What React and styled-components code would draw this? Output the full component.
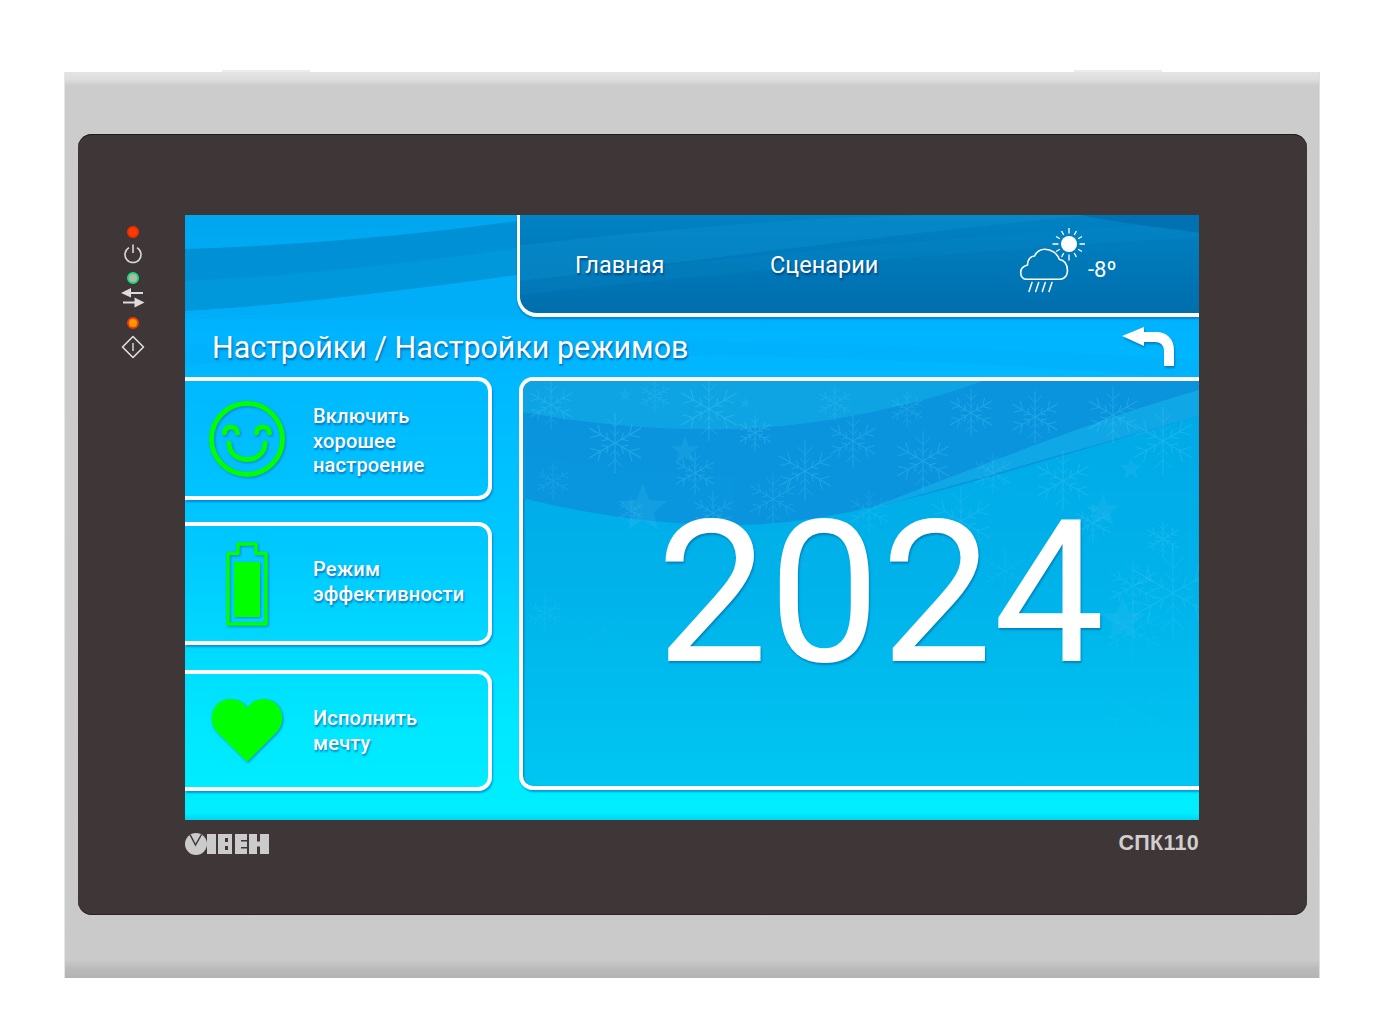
import styled, { createGlobalStyle } from "styled-components";

const GlobalStyle = createGlobalStyle`
  html, body {
    margin: 0;
    padding: 0;
    background: #fff;
  }
  body {
    font-family: Roboto, "Liberation Sans", sans-serif;
  }
`;

const Page = styled.div`
  width: 1400px;
  height: 1022px;
  padding: 72px 0 0 64px;
  box-sizing: border-box;
  overflow: hidden;
`;

const Bezel = styled.div`
  position: relative;
  width: 1256px;
  height: 906px;
  box-sizing: border-box;
  padding: 62px 13px 63px 14px;
  background: linear-gradient(
    180deg,
    #e4e4e4 0,
    #dedede 7px,
    #cccccc 14px,
    #cacaca 888px,
    #b9b9b9 898px,
    #b4b4b4 100%
  );
  box-shadow: inset 1px 0 0 #e6e6e6, inset -1px 0 0 #dedede;
`;

const Tab = styled.div`
  position: absolute;
  top: -2px;
  left: ${(p) => p.$left}px;
  width: 88px;
  height: 2px;
  background: #ececec;
`;

const Face = styled.div`
  height: 100%;
  box-sizing: border-box;
  display: flex;
  padding-top: 81px;
  background: #3f3638;
  border-radius: 14px;
  box-shadow: inset 0 1px 0 #1f1b1c, inset 0 -1px 0 #2a2526;
`;

const LedRail = styled.div`
  width: 107px;
  flex: none;
  box-sizing: border-box;
  padding: 11px 0 0 3px;
  display: flex;
  flex-direction: column;
  align-items: center;
`;

const Led = styled.span`
  width: ${(p) => p.$size}px;
  height: ${(p) => p.$size}px;
  border-radius: 50%;
  background: ${(p) => p.$core};
  border: 2px solid ${(p) => p.$ring};
  box-sizing: border-box;
  flex: none;
  margin-bottom: ${(p) => p.$after}px;
`;

const RailIcon = styled.svg`
  display: block;
  flex: none;
  margin-bottom: ${(p) => p.$after}px;
`;

const Column = styled.div`
  width: 1014px;
  flex: none;
`;

const Screen = styled.div`
  position: relative;
  width: 1014px;
  height: 605px;
  overflow: hidden;
  background: linear-gradient(180deg, #00a6ee 0, #00b4ff 20%, #00c8ff 55%, #00e8ff 85%, #00eeff 98.8%, #00d4f0 100%);
`;

const ScreenWaves = styled.svg`
  position: absolute;
  top: 0;
  left: 0;
`;

const TopRow = styled.div`
  position: relative;
  display: flex;
  justify-content: flex-end;
  height: 102px;
`;

const Nav = styled.nav`
  position: relative;
  width: 682px;
  height: 102px;
  box-sizing: border-box;
  overflow: hidden;
  border-left: 3px solid #fff;
  border-bottom: 4px solid #fff;
  border-bottom-left-radius: 20px;
  background: linear-gradient(180deg, #0082c4 0, #0078b8 50%, #006ead 100%);
  box-shadow: 0 2px 2px rgba(0, 80, 160, 0.45);
  display: flex;
  align-items: center;
  color: #fff;
`;

const NavWaves = styled.svg`
  position: absolute;
  top: 0;
  left: 0;
`;

const NavLink = styled.span`
  position: relative;
  width: ${(p) => p.$width}px;
  margin-left: ${(p) => p.$left}px;
  flex: none;
  font-size: 23.5px;
  line-height: 28px;
  padding-top: 2px;
  text-shadow: 1px 2px 2px rgba(0, 50, 110, 0.7);
`;

const Weather = styled.div`
  position: relative;
  display: flex;
  align-items: flex-start;
  margin-left: 138px;
  margin-top: -6px;
`;

const Temp = styled.span`
  font-size: 22px;
  line-height: 26px;
  margin: 29px 0 0 3px;
`;

const TitleRow = styled.div`
  position: relative;
  height: 60px;
  box-sizing: border-box;
  padding: 13px 24px 0 27px;
  display: flex;
  justify-content: space-between;
  align-items: flex-start;
`;

const Title = styled.h1`
  margin: 0;
  font-weight: 400;
  font-size: 30.45px;
  line-height: 36px;
  color: #fff;
  text-shadow: 1px 2px 2px rgba(0, 70, 150, 0.65);
`;

const BackIcon = styled.svg`
  display: block;
  margin-top: -3px;
  filter: drop-shadow(1px 2px 1px rgba(0, 70, 150, 0.5));
`;

const Body = styled.div`
  position: relative;
  display: flex;
  justify-content: space-between;
  align-items: flex-start;
`;

const Cards = styled.div`
  width: 307px;
  flex: none;
`;

const Card = styled.div`
  width: 307px;
  height: ${(p) => p.$height}px;
  margin-bottom: ${(p) => p.$after}px;
  box-sizing: border-box;
  display: flex;
  align-items: center;
  border: 4px solid #fff;
  border-left: 0;
  border-radius: 0 14px 14px 0;
  box-shadow: 1px 2px 2px rgba(0, 90, 190, 0.55);
`;

const CardIcon = styled.div`
  width: 124px;
  margin-right: 4px;
  flex: none;
  display: flex;
  justify-content: center;
  svg {
    display: block;
    filter: drop-shadow(1px 1px 1px rgba(0, 80, 170, 0.6));
  }
`;

const CardLabel = styled.div`
  font-size: 20px;
  font-weight: 500;
  line-height: 24.5px;
  color: #fff;
  letter-spacing: 0.2px;
  padding-top: ${(p) => p.$nudge || 0}px;
  padding-bottom: ${(p) => p.$lift || 0}px;
  text-shadow: 1px 2px 2px rgba(0, 80, 170, 0.65);
`;

const Hero = styled.div`
  position: relative;
  width: 680px;
  height: 413px;
  box-sizing: border-box;
  overflow: hidden;
  border: 4px solid #fff;
  border-right: 0;
  border-radius: 14px 0 0 14px;
  box-shadow: 1px 2px 2px rgba(0, 90, 190, 0.55), inset 1px 1px 2px rgba(0, 70, 140, 0.5);
  background: linear-gradient(180deg, #00a8e6 0, #00b2ea 50%, #00bcee 75%, #00c6f2 100%);
  display: flex;
  justify-content: center;
`;

const HeroArt = styled.svg`
  position: absolute;
  top: 0;
  left: 0;
`;

const Year = styled.div`
  position: relative;
  font-size: 198px;
  line-height: 232px;
  margin-top: 96px;
  margin-left: 40px;
  color: #fff;
  letter-spacing: 1px;
  text-shadow: 1px 2px 2px rgba(0, 70, 140, 0.45);
`;

const Footer = styled.div`
  height: 46px;
  box-sizing: border-box;
  padding-top: 1px;
  display: flex;
  justify-content: space-between;
  align-items: center;
`;

const Model = styled.span`
  font-family: "Liberation Sans", Arial, sans-serif;
  font-weight: 700;
  font-size: 21.5px;
  letter-spacing: 0.3px;
  color: #cfcfcf;
`;

// snowflakes of the big panel: x, y, radius, opacity
const FLAKES = [
  [28, 24, 24, 0.3], [92, 62, 30, 0.38], [132, 15, 16, 0.24], [186, 28, 32, 0.38], [232, 52, 18, 0.34],
  [172, 92, 22, 0.3], [282, 90, 30, 0.32], [250, 118, 26, 0.26], [330, 60, 26, 0.3], [346, 130, 22, 0.22],
  [312, 22, 18, 0.22], [400, 80, 30, 0.32], [384, 28, 18, 0.24], [448, 32, 24, 0.32], [470, 92, 20, 0.24],
  [512, 36, 26, 0.34], [540, 100, 30, 0.32], [590, 34, 28, 0.34], [640, 60, 34, 0.32], [438, 140, 34, 0.28],
  [190, 132, 22, 0.28], [108, 130, 14, 0.22], [30, 100, 18, 0.18], [570, 142, 20, 0.28], [640, 158, 18, 0.28],
  [610, 205, 26, 0.26], [650, 212, 46, 0.28], [610, 250, 30, 0.16], [482, 190, 24, 0.14], [22, 232, 18, 0.16],
  [80, 250, 24, 0.06], [270, 176, 24, 0.1], [610, 330, 34, 0.08],
];

// x, y, size
const STARS = [
  [162, 70, 15], [120, 128, 26], [580, 130, 18], [608, 88, 12], [600, 240, 24], [102, 14, 7], [222, 22, 6],
];

const starPoints = (x, y, r) =>
  Array.from({ length: 10 }, (_, i) => {
    const a = (Math.PI / 5) * i - Math.PI / 2;
    const d = i % 2 === 0 ? r : r * 0.42;
    return `${(x + d * Math.cos(a)).toFixed(1)},${(y + d * Math.sin(a)).toFixed(1)}`;
  }).join(" ");

const Flake = ({ x, y, r, o }) => (
  <g transform={`translate(${x} ${y})`} stroke="#4cc8f4" strokeWidth="1" opacity={o} fill="none">
    {[0, 60, 120, 180, 240, 300].map((a) => (
      <g key={a} transform={`rotate(${a})`}>
        <line x1="0" y1="0" x2="0" y2={-r} />
        <line x1="0" y1={-r * 0.55} x2={-r * 0.25} y2={-r * 0.8} />
        <line x1="0" y1={-r * 0.55} x2={r * 0.25} y2={-r * 0.8} />
        <line x1="0" y1={-r * 0.25} x2={-r * 0.16} y2={-r * 0.42} />
        <line x1="0" y1={-r * 0.25} x2={r * 0.16} y2={-r * 0.42} />
      </g>
    ))}
  </g>
);

const App = () => {
  return (
    <>
      <GlobalStyle />
      <Page>
        <Bezel>
          <Tab $left={158} />
          <Tab $left={1010} />
          <Face>
            <LedRail>
              <Led $size={12} $core="#ff3a00" $ring="#f03000" $after={6} />
              <RailIcon width="20" height="20" viewBox="0 0 20 20" $after={8}>
                <path d="M6 3.6a8 8 0 1 0 8 0" fill="none" stroke="#d8d8d8" strokeWidth="1.6" />
                <line x1="10" y1="0.5" x2="10" y2="9" stroke="#d8d8d8" strokeWidth="1.6" />
              </RailIcon>
              <Led $size={12} $core="#b4b4b4" $ring="#14e070" $after={4} />
              <RailIcon width="24" height="20" viewBox="0 0 24 20" $after={9}>
                <path d="M0 5 10 0v4h12v2H10v3.500z" fill="#dcdcdc" />
                <path d="M23.500 14.500 13.500 9.500v4H2v2h11.500v4z" fill="#dcdcdc" />
              </RailIcon>
              <Led $size={12} $core="#ff9a00" $ring="#f03a08" $after={6} />
              <RailIcon width="24" height="24" viewBox="0 0 24 24" $after={0}>
                <path d="M12 1.500 22.500 12 12 22.500 1.500 12z" fill="none" stroke="#e0e0e0" strokeWidth="1.6" strokeLinejoin="round" />
                <line x1="12" y1="8" x2="12" y2="16" stroke="#e0e0e0" strokeWidth="1.4" />
              </RailIcon>
            </LedRail>
            <Column>
              <Screen>
                <ScreenWaves width="1014" height="605" viewBox="0 0 1014 605">
                  <path d="M0 34C120 30 230 20 340 5v54C230 74 110 90 0 96z" fill="#0090d6" />
                  <path d="M0 66C120 60 230 48 340 32v27C230 74 110 90 0 96z" fill="#0098dc" opacity="0.8" />
                  <path d="M0 96C110 90 230 74 340 59v45H0z" fill="#00aef8" />
                  <path d="M0 130C300 120 700 125 1014 145v20C700 135 300 135 0 150z" fill="#00a8f4" opacity="0.35" />
                </ScreenWaves>
                <TopRow>
                  <Nav>
                    <NavWaves width="680" height="100" viewBox="0 0 680 100">
                      <path d="M0 30C180 10 330 0 420 0h150C380 18 180 46 0 66z" fill="#0a8ccc" opacity="0.55" />
                      <path d="M0 66C180 46 420 20 680 8v14C420 38 180 60 0 80z" fill="#0a8ccc" opacity="0.22" />
                      <path d="M560 0h120v18C620 10 590 6 560 0z" fill="#0068a6" opacity="0.6" />
                    </NavWaves>
                    <NavLink $left={55} $width={195}>Главная</NavLink>
                    <NavLink $left={0} $width={111}>Сценарии</NavLink>
                    <Weather>
                      <svg width="66" height="66" viewBox="0 0 66 66">
                        <g stroke="#fff" fill="none" strokeLinecap="round">
                          <circle cx="50" cy="16" r="8" fill="#fff" stroke="none" />
                          {[0, 30, 60, 90, 120, 150, 180, 210, 240, 270, 300, 330].map((a) => (
                            <line key={a} x1="50" y1="5" x2="50" y2={a % 90 === 0 ? 0 : 1.5} strokeWidth="1.3" transform={`rotate(${a} 50 16)`} />
                          ))}
                          <path
                            d="M7.700 51.300H41C46 51.300 48.500 47 48.500 42.500 48.500 36 45 32 40.500 31.500 38 25 32 21.300 26 21.300 21 21.300 17.500 24 15.500 28 11.500 28 8.500 31.500 8.500 37 4.500 38 1.700 41 1.700 44.500 1.700 48.500 4 51.300 7.700 51.300z"
                            fill="#0078b8"
                            strokeWidth="1.6"
                          />
                          <path d="M13 54.500 10 63.500M19.700 54.500 16.700 63.500M26.300 54.500 23.300 63.500M33 54.500 30 63.500" strokeWidth="1.5" />
                        </g>
                      </svg>
                      <Temp>-8º</Temp>
                    </Weather>
                  </Nav>
                </TopRow>
                <TitleRow>
                  <Title>Настройки / Настройки режимов</Title>
                  <BackIcon width="53" height="40" viewBox="0 0 53 40">
                    <path d="M0 9 22 0v5H34C45 5 52 12 52 23V39H42V24C42 18 38 15 33 15H22v4z" fill="#fff" />
                  </BackIcon>
                </TitleRow>
                <Body>
                  <Cards>
                    <Card $height={123} $after={22}>
                      <CardIcon>
                        <svg width="78" height="78" viewBox="0 0 78 78">
                          <g fill="none" stroke="#00ff00" strokeLinecap="round">
                            <circle cx="39" cy="39" r="35.500" strokeWidth="5" />
                            <path d="M16.500 33c0-8 13-8 13 0" strokeWidth="5" />
                            <path d="M48.500 33c0-8 13-8 13 0" strokeWidth="5" />
                            <path d="M21 43c0 22 36 22 36 0" strokeWidth="5" />
                          </g>
                        </svg>
                      </CardIcon>
                      <CardLabel $nudge={5}>
                        Включить
                        <br />
                        хорошее
                        <br />
                        настроение
                      </CardLabel>
                    </Card>
                    <Card $height={123} $after={25}>
                      <CardIcon>
                        <svg width="42" height="84" viewBox="0 0 42 84">
                          <path
                            d="M2 82V11.500H12V2H30V11.500H40V82z"
                            fill="none"
                            stroke="#00ff00"
                            strokeWidth="3.500"
                            strokeLinejoin="round"
                          />
                          <rect x="8" y="20" width="26" height="55" fill="#00ff00" />
                        </svg>
                      </CardIcon>
                      <CardLabel $lift={4}>
                        Режим
                        <br />
                        эффективности
                      </CardLabel>
                    </Card>
                    <Card $height={121} $after={0}>
                      <CardIcon>
                        <svg width="72" height="66" viewBox="0 0 72 66">
                          <path
                            d="M36 64 6 34C-5 22 2 1 19 1c8 0 13 3 17 9 4-6 9-9 17-9 17 0 24 21 13 33z"
                            fill="#00ff00"
                          />
                        </svg>
                      </CardIcon>
                      <CardLabel>
                        Исполнить
                        <br />
                        мечту
                      </CardLabel>
                    </Card>
                  </Cards>
                  <Hero>
                    <HeroArt width="680" height="413" viewBox="0 0 680 413">
                      <path d="M0 0H680V34C480 90 330 144 212 144 130 144 60 132 0 117z" fill="#0a94dd" />
                      <path d="M0 31C80 46 170 52 247 46 320 40 400 22 460 0H0z" fill="#0ea4e4" />
                      <path d="M345 128C420 108 520 78 680 34V8C600 30 480 75 345 128z" fill="#12aae8" opacity="0.85" />
                      <path d="M0 70C60 84 130 96 212 96V144C130 144 60 132 0 117z" fill="#0a9ae0" opacity="0.45" />
                      {STARS.map(([x, y, s]) => (
                        <polygon key={`${x}-${y}`} points={starPoints(x, y, s)} fill="#3cbcf0" opacity="0.22" />
                      ))}
                      {FLAKES.map(([x, y, r, o]) => (
                        <Flake key={`${x}-${y}`} x={x} y={y} r={r} o={o} />
                      ))}
                    </HeroArt>
                    <Year>2024</Year>
                  </Hero>
                </Body>
              </Screen>
              <Footer>
                <svg width="86" height="22" viewBox="0 0 86 22" fill="#cbcbcb">
                  <circle cx="11" cy="11" r="11" />
                  <path d="M5 1.500 10.500 12 16.500 1.500" fill="none" stroke="#3f3638" strokeWidth="1.5" />
                  <rect x="22" y="1" width="9" height="20" />
                  <rect x="33" y="1" width="14" height="20" />
                  <rect x="40" y="5" width="3" height="4" fill="#3f3638" />
                  <rect x="40" y="13" width="3" height="4" fill="#3f3638" />
                  <rect x="50" y="1" width="12" height="20" />
                  <rect x="56" y="7" width="6" height="1.500" fill="#3f3638" />
                  <rect x="56" y="14" width="6" height="1.500" fill="#3f3638" />
                  <rect x="64" y="1" width="20" height="20" />
                  <rect x="72" y="1" width="3" height="7.500" fill="#3f3638" />
                  <rect x="72" y="13.500" width="3" height="7.500" fill="#3f3638" />
                </svg>
                <Model>СПК110</Model>
              </Footer>
            </Column>
          </Face>
        </Bezel>
      </Page>
    </>
  );
};

export default App;
